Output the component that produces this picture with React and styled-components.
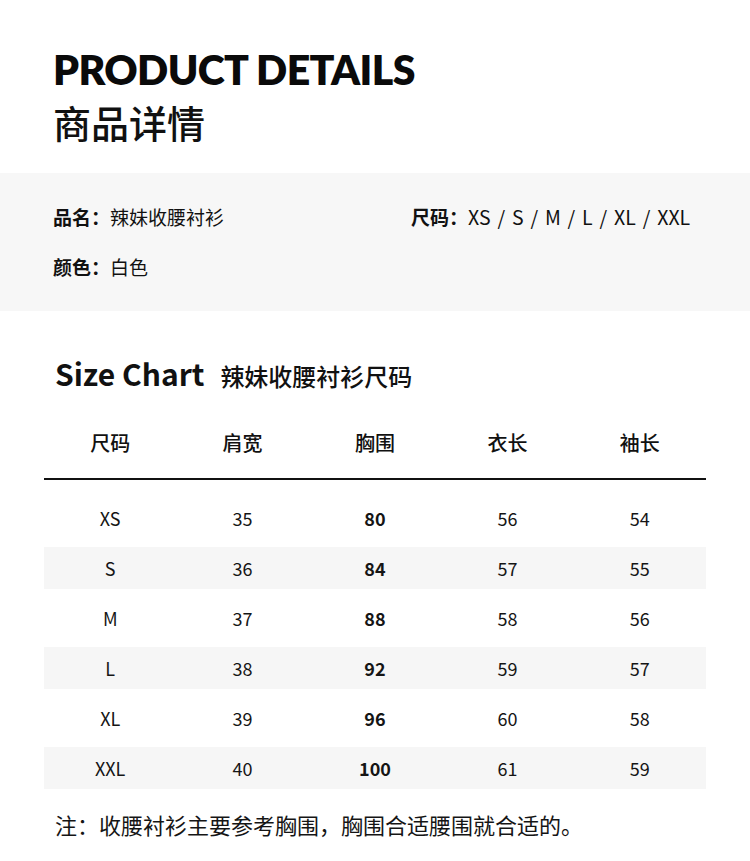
import React from "react";
import styled, { createGlobalStyle } from "styled-components";

const Global = createGlobalStyle`
  html, body { margin: 0; padding: 0; background: #ffffff; }
  body { font-family: "Noto Sans CJK SC", "Noto Sans", sans-serif; color: #111; }
`;

const Page = styled.div`
  width: 750px;
  display: flex;
  flex-direction: column;
`;

const Header = styled.header`
  padding: 45px 0 0 53px;
  display: flex;
  flex-direction: column;
  gap: 0;
  height: 128px;
`;

const TitleEn = styled.h1`
  margin: 0;
  font-family: Lato, "Noto Sans", sans-serif;
  font-size: 41px;
  line-height: 50px;
  font-weight: 800;
  color: #0a0a0a;
  letter-spacing: -0.6px;
`;

const TitleZh = styled.div`
  font-size: 38px;
  line-height: 54px;
  font-weight: 500;
  color: #111;
`;

const InfoBand = styled.section`
  background: #f7f7f7;
  padding: 32px 53px;
  display: flex;
  flex-direction: column;
  gap: 26px;
`;

const InfoRow = styled.div`
  display: flex;
`;

const InfoItem = styled.div`
  font-size: 19px;
  line-height: 24px;
  width: ${(p) => p.$w || "auto"};
  white-space: nowrap;
`;

const Label = styled.span`
  font-weight: 700;
`;

const Sizes = styled.span`
  word-spacing: 2.5px;
  font-size: 19.5px;
`;

const ChartTitle = styled.div`
  margin: 44px 0 0 55px;
  display: flex;
  align-items: baseline;
  gap: 16px;
  line-height: 36px;
`;

const ChartEn = styled.span`
  font-size: 30px;
  font-weight: 700;
`;

const ChartZh = styled.span`
  font-size: 24px;
  font-weight: 500;
`;

const Table = styled.div`
  margin: 14px 0 0 44px;
  width: 662px;
  display: flex;
  flex-direction: column;
`;

const HeadRow = styled.div`
  display: grid;
  grid-template-columns: repeat(5, 1fr);
  height: 70px;
  align-items: center;
  border-bottom: 2px solid #111;
`;

const HeadCell = styled.div`
  text-align: center;
  font-size: 20px;
  line-height: 24px;
  font-weight: 500;
`;

const Body = styled.div`
  display: flex;
  flex-direction: column;
  gap: 8px;
  padding-top: 17px;
`;

const Row = styled.div`
  display: grid;
  grid-template-columns: repeat(5, 1fr);
  height: 42px;
  align-items: center;
  background: ${(p) => (p.$shade ? "#f6f6f6" : "transparent")};
`;

const Cell = styled.div`
  text-align: center;
  font-size: 18px;
  line-height: 22px;
  font-weight: ${(p) => (p.$bold ? 700 : 400)};
  color: #151515;
`;

const Note = styled.p`
  margin: 21px 0 0 55px;
  font-size: 22px;
  line-height: 28px;
  color: #151515;
`;

const heads = ["尺码", "肩宽", "胸围", "衣长", "袖长"];
const rows = [
  ["XS", "35", "80", "56", "54"],
  ["S", "36", "84", "57", "55"],
  ["M", "37", "88", "58", "56"],
  ["L", "38", "92", "59", "57"],
  ["XL", "39", "96", "60", "58"],
  ["XXL", "40", "100", "61", "59"],
];

export default function App() {
  return (
    <Page>
      <Global />
      <Header>
        <TitleEn>PRODUCT DETAILS</TitleEn>
        <TitleZh>商品详情</TitleZh>
      </Header>
      <InfoBand>
        <InfoRow>
          <InfoItem $w="358px">
            <Label>品名：</Label>辣妹收腰衬衫
          </InfoItem>
          <InfoItem>
            <Label>尺码：</Label>
            <Sizes>XS / S / M / L / XL / XXL</Sizes>
          </InfoItem>
        </InfoRow>
        <InfoRow>
          <InfoItem>
            <Label>颜色：</Label>白色
          </InfoItem>
        </InfoRow>
      </InfoBand>
      <ChartTitle>
        <ChartEn>Size Chart</ChartEn>
        <ChartZh>辣妹收腰衬衫尺码</ChartZh>
      </ChartTitle>
      <Table>
        <HeadRow>
          {heads.map((h) => (
            <HeadCell key={h}>{h}</HeadCell>
          ))}
        </HeadRow>
        <Body>
          {rows.map((r, i) => (
            <Row key={r[0]} $shade={i % 2 === 1}>
              {r.map((c, j) => (
                <Cell key={j} $bold={j === 2}>
                  {c}
                </Cell>
              ))}
            </Row>
          ))}
        </Body>
      </Table>
      <Note>注：收腰衬衫主要参考胸围，胸围合适腰围就合适的。</Note>
    </Page>
  );
}
